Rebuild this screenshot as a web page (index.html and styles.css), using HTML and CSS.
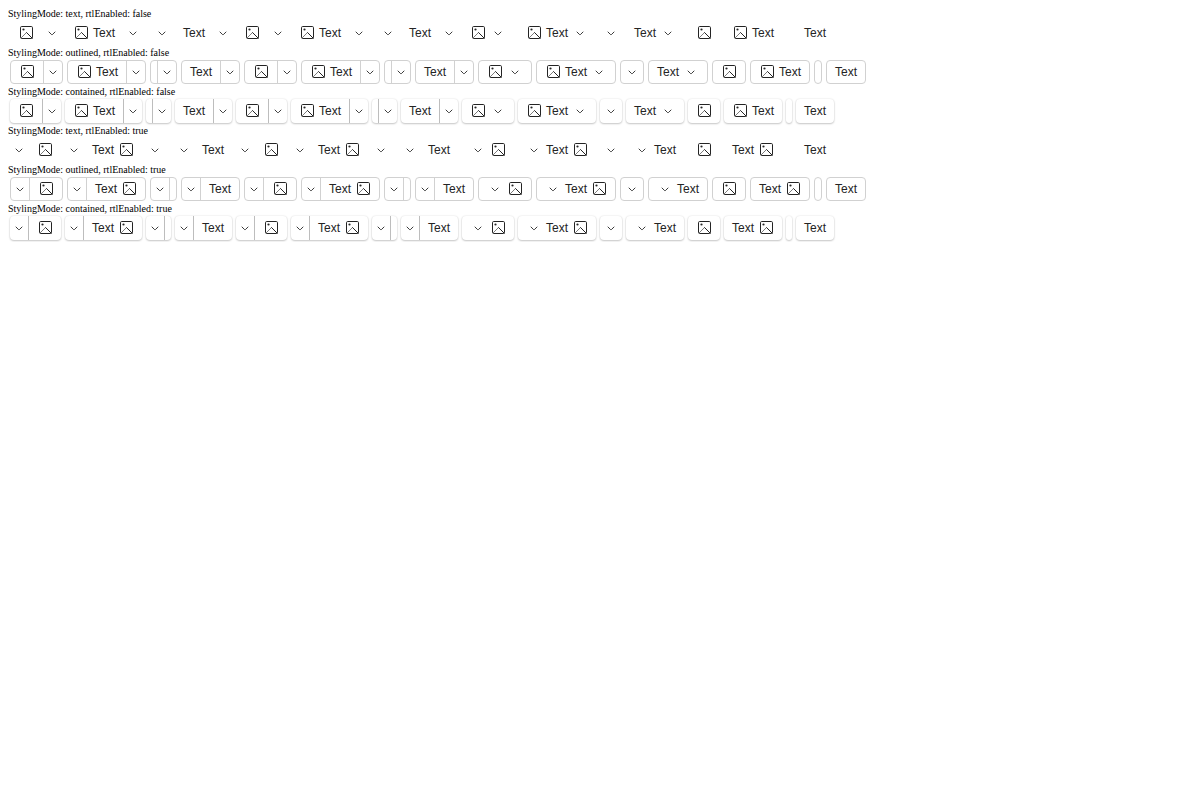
FILE: index.html
```html
<!DOCTYPE html>
<html lang="en">
<head>
<meta charset="utf-8">
<title>Drop-down buttons</title>
<link rel="stylesheet" href="styles.css">
</head>
<body>
<svg class="sprite" aria-hidden="true">
  <symbol id="image" viewBox="0 0 16 16">
    <rect x="2.5" y="1.5" width="12" height="12" rx="1.2" fill="none" stroke="currentColor" stroke-width="1"/>
    <circle cx="5.5" cy="4.5" r="1.1" fill="currentColor"/>
    <path d="M3 13L8.5 7.5" fill="none" stroke="currentColor" stroke-width="0.6"/>
    <path d="M8.3 7.3l6.2 6.2" fill="none" stroke="currentColor" stroke-width="1"/>
  </symbol>
  <symbol id="chevron" viewBox="0 0 16 16">
    <path d="M5 7l2.6 2.6q.4.4.8 0L11 7" fill="none" stroke="currentColor" stroke-width="0.9" stroke-linecap="round"/>
  </symbol>
</svg>
<main id="samples"></main>
<script src="script.js"></script>
</body>
</html>
```

FILE: styles.css
```css
body {
  margin: 8px;
  background: #fff;
  color: #000;
  font-family: "Liberation Serif", serif;
}

.sprite {
  display: none;
}

.caption {
  font-size: 10px;
  line-height: 11px;
}

.row {
  display: flex;
  flex-wrap: wrap;
  gap: 4px;
  padding: 2px;
}

.item {
  display: flex;
  height: 24px;
  box-sizing: border-box;
  border-radius: 4px;
  background: #fff;
}

.outlined .item {
  border: 1px solid #d1d1d1;
}

.contained .item {
  box-shadow: 0 0 2px rgba(0, 0, 0, 0.12), 0 1px 2px rgba(0, 0, 0, 0.2);
}

.button {
  display: flex;
  align-items: center;
  gap: 4px;
  margin: 0;
  padding: 0 8px;
  border: 0;
  border-radius: 4px;
  background: transparent;
  color: #242424;
  font: 12px/16px "Liberation Sans", sans-serif;
}

.button.blank {
  padding: 0 3px;
}

.toggle {
  padding: 0 1px;
}

.divider {
  width: 1px;
  background: transparent;
}

.outlined .divider {
  background: #d1d1d1;
}

.contained .divider {
  background: #bdbdbd;
}

.icon {
  display: block;
  width: 16px;
  height: 16px;
}

.rtl .item {
  flex-direction: row-reverse;
}

.rtl .button {
  direction: rtl;
}
```

FILE: script.js
```js
const contents = [
  { icon: true, text: '' },
  { icon: true, text: 'Text' },
  { icon: false, text: '' },
  { icon: false, text: 'Text' }
];
const kinds = ['split', 'split', 'menu', 'plain'];

const glyph = (name) => `<svg class="icon" aria-hidden="true"><use href="#${name}"/></svg>`;

function item(kind, { icon, text }) {
  const blank = !icon && !text ? ' blank' : '';
  const body = (icon ? glyph('image') : '') + (text ? `<span>${text}</span>` : '');
  const arrow = kind === 'menu' ? glyph('chevron') : '';
  const main = `<button type="button" class="button${blank}" aria-label="${text || 'Button'}">${body}${arrow}</button>`;
  const toggle = kind === 'split'
    ? `<span class="divider"></span><button type="button" class="button toggle" aria-label="Open menu">${glyph('chevron')}</button>`
    : '';
  return `<div class="item">${main}${toggle}</div>`;
}

let html = '';
for (const rtl of [false, true]) {
  for (const mode of ['text', 'outlined', 'contained']) {
    const items = kinds.map((kind) => contents.map((content) => item(kind, content)).join('')).join('');
    html += `<section class="${mode}${rtl ? ' rtl' : ''}">
      <div class="caption">StylingMode: ${mode}, rtlEnabled: ${rtl}</div>
      <div class="row">${items}</div>
    </section>`;
  }
}
document.getElementById('samples').innerHTML = html;
```
